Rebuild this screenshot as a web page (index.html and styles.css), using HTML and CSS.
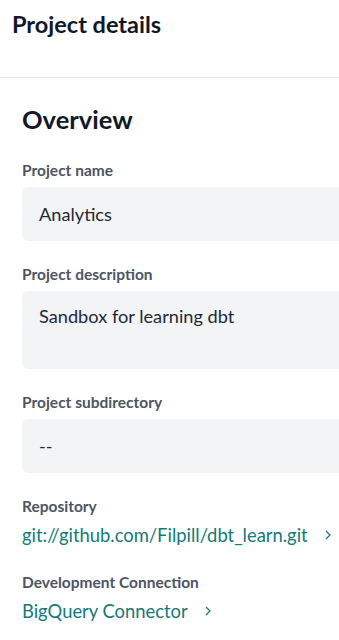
FILE: index.html
```html
<!DOCTYPE html>
<html lang="en">
<head>
<meta charset="utf-8">
<link rel="stylesheet" href="styles.css">
</head>
<body>
<header class="page-header">
  <h1 class="page-title">Project details</h1>
</header>
<main class="content">
  <h2 class="section-title">Overview</h2>
  <div class="field">
    <div class="label">Project name</div>
    <div class="box">Analytics</div>
  </div>
  <div class="field">
    <div class="label">Project description</div>
    <div class="box box-tall">Sandbox for learning dbt</div>
  </div>
  <div class="field">
    <div class="label">Project subdirectory</div>
    <div class="box">--</div>
  </div>
  <div class="field link-field">
    <div class="label">Repository</div>
    <a class="link">git://github.com/Filpill/dbt_learn.git<svg class="chev" width="6" height="10" viewBox="0 0 6 10"><path d="M1 1 L5 5 L1 9" fill="none" stroke="currentColor" stroke-width="1.2"/></svg></a>
  </div>
  <div class="field link-field">
    <div class="label">Development Connection</div>
    <a class="link">BigQuery Connector<svg class="chev" width="6" height="10" viewBox="0 0 6 10"><path d="M1 1 L5 5 L1 9" fill="none" stroke="currentColor" stroke-width="1.2"/></svg></a>
  </div>
</main>
</body>
</html>
```

FILE: styles.css
```css
* { box-sizing: border-box; }
html, body { margin: 0; padding: 0; background: #fff; }
body {
  font-family: Lato, "Noto Sans", sans-serif;
  color: #111827;
  width: 339px;
  height: 640px;
  overflow: hidden;
}
.page-header {
  padding: 10px 12px 0 12px;
  height: 78px;
  border-bottom: 1px solid #e5e7eb;
}
.page-title {
  margin: 0;
  font-size: 23.5px;
  font-weight: 700;
  line-height: 28px;
  color: #111827;
}
.content {
  padding: 25px 0 0 22px;
  overflow: hidden;
}
.section-title {
  margin: 0 0 26px 0;
  font-size: 25.5px;
  font-weight: 700;
  line-height: 32px;
  color: #111827;
}
.field { margin-bottom: 24px; }
.label {
  font-size: 15.5px;
  font-weight: 700;
  color: #4b5563;
  line-height: 18px;
  margin-bottom: 8px;
}
.box {
  width: 340px;
  height: 54px;
  background: #f3f4f6;
  border-radius: 6px;
  padding: 16px 17px;
  font-size: 18.2px;
  line-height: 22px;
  color: #1f2937;
}
.box-tall { height: 78px; padding-top: 14px; }
.link-field { margin-bottom: 27px; }
.link-field .label { margin-bottom: 9px; }
.link {
  display: flex;
  align-items: center;
  font-size: 18.4px;
  line-height: 22px;
  color: #127a78;
  text-decoration: none;
}
.chev {
  margin-left: 17px;
  color: #127a78;
}
```
